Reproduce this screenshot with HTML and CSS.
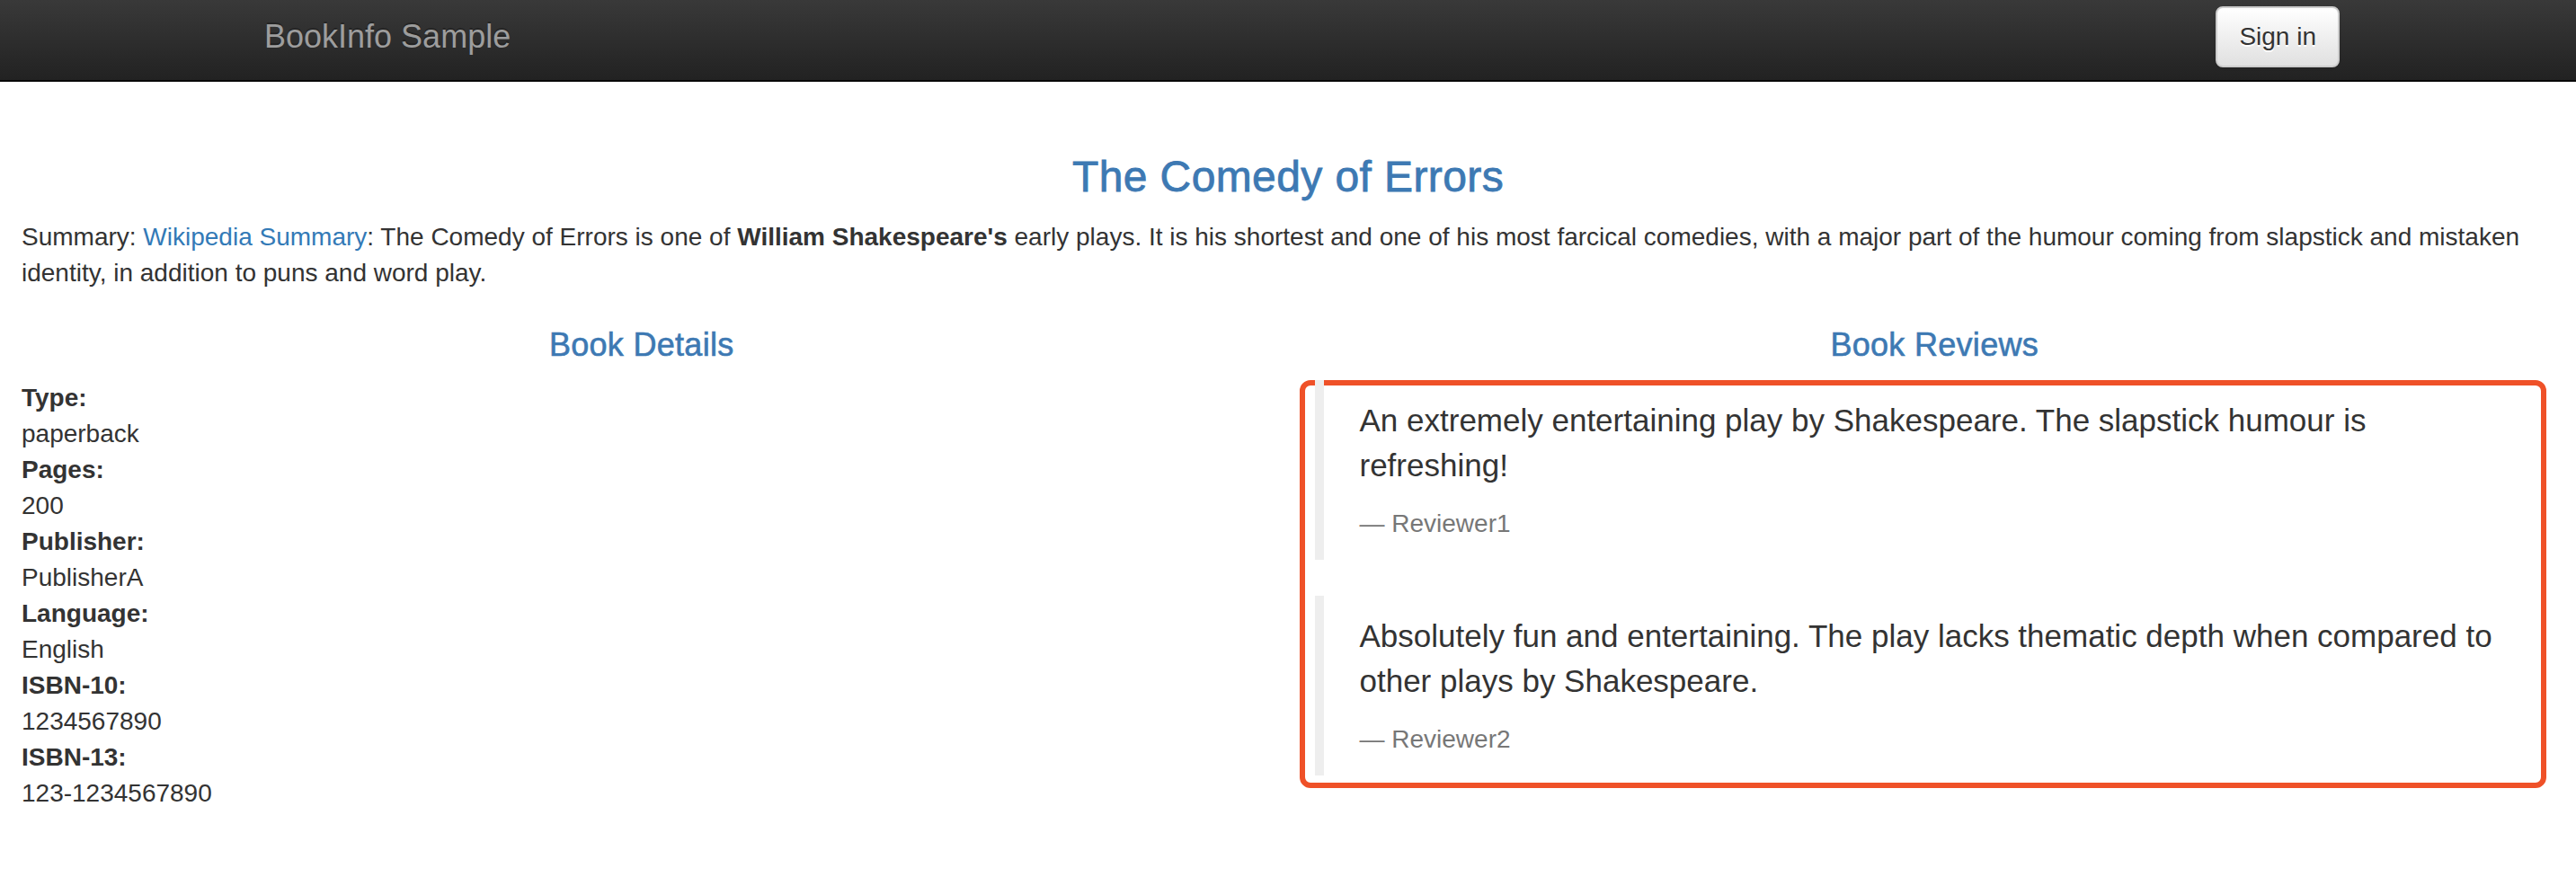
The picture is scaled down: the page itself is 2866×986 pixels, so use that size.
FILE: index.html
```html
<!DOCTYPE html>
<html lang="en">
<head>
<meta charset="utf-8">
<title>Simple Bookstore App</title>
<link rel="stylesheet" href="styles.css">
</head>
<body>
<nav class="navbar">
  <div class="nav-inner">
    <a class="brand" href="#">BookInfo Sample</a>
    <button type="button" class="btn">Sign in</button>
  </div>
</nav>
<main class="page">
  <h3 class="title">The Comedy of Errors</h3>
  <p class="summary">Summary: <a href="#">Wikipedia Summary</a>: The Comedy of Errors is one of <b>William Shakespeare's</b> early plays. It is his shortest and one of his most farcical comedies, with a major part of the humour coming from slapstick and mistaken identity, in addition to puns and word play.</p>
  <div class="columns">
    <section class="col">
      <h4 class="section-title">Book Details</h4>
      <dl class="details">
        <dt>Type:</dt><dd>paperback</dd>
        <dt>Pages:</dt><dd>200</dd>
        <dt>Publisher:</dt><dd>PublisherA</dd>
        <dt>Language:</dt><dd>English</dd>
        <dt>ISBN-10:</dt><dd>1234567890</dd>
        <dt>ISBN-13:</dt><dd>123-1234567890</dd>
      </dl>
    </section>
    <section class="col">
      <h4 class="section-title">Book Reviews</h4>
      <div class="review-box">
        <blockquote class="review">
          <p>An extremely entertaining play by Shakespeare. The slapstick humour is refreshing!</p>
          <small>Reviewer1</small>
        </blockquote>
        <blockquote class="review">
          <p>Absolutely fun and entertaining. The play lacks thematic depth when compared to other plays by Shakespeare.</p>
          <small>Reviewer2</small>
        </blockquote>
      </div>
    </section>
  </div>
</main>
</body>
</html>
```
FILE: styles.css
```css
* { box-sizing: border-box; }
html, body { margin: 0; padding: 0; background: #fff; }
body {
  font-family: "Liberation Sans", Arial, Helvetica, sans-serif;
  font-size: 28px;
  line-height: 40px;
  color: #333;
}
.navbar {
  height: 91px;
  background: linear-gradient(to bottom, #393939 0%, #222 100%);
  border-bottom: 2px solid #080808;
}
.nav-inner {
  width: 2340px;
  height: 100%;
  margin: 0 auto;
  display: flex;
  justify-content: space-between;
  align-items: flex-start;
}
.brand {
  padding: 21px 0 0 31px;
  font-size: 36px;
  line-height: 40px;
  color: #9d9d9d;
  text-decoration: none;
  text-shadow: 0 -2px 0 rgba(0,0,0,.25);
}
.btn {
  margin-top: 7px;
  padding: 12px 24px;
  font-family: inherit;
  font-size: 28px;
  line-height: 40px;
  color: #333;
  background: linear-gradient(to bottom, #fff 0%, #e0e0e0 100%);
  border: 2px solid #ccc;
  border-radius: 8px;
  text-shadow: 0 2px 0 #fff;
  box-shadow: inset 0 2px 0 rgba(255,255,255,.15), 0 2px 2px rgba(0,0,0,.075);
}
.page { padding: 40px 24px 0; }
.title {
  margin: 40px 0 20px;
  font-size: 48px;
  line-height: 1.1;
  font-weight: 500;
  letter-spacing: 0.4px;
  -webkit-text-stroke: 0.8px #3d79b3;
  color: #3d79b3;
  text-align: center;
}
.summary { margin: 0; }
.summary a { color: #337ab7; text-decoration: none; }
.columns {
  display: grid;
  grid-template-columns: 1fr 1fr;
  column-gap: 59px;
}
.section-title {
  margin: 40px 0 20px;
  font-size: 36px;
  line-height: 1.1;
  font-weight: 500;
  letter-spacing: 0.3px;
  -webkit-text-stroke: 0.6px #3d79b3;
  color: #3d79b3;
  text-align: center;
}
.details { margin: 0 0 40px; }
.details dt { font-weight: bold; }
.details dd { margin: 0; }
.review-box {
  border: 6px solid #ef5128;
  border-radius: 12px;
  margin: 0 9px 0 -17px;
  padding: 0 0 8px 11px;
}
.review {
  margin: 0 0 40px;
  padding: 20px 32px 20px 40px;
  border-left: 10px solid #eee;
  font-size: 35px;
  line-height: 50px;
}
.review:first-child { margin-top: -6px; }
.review:last-child { margin-bottom: 0; }
.review p { margin: 0 0 20px; }
.review small {
  display: block;
  font-size: 28px;
  line-height: 40px;
  color: #777;
}
.review small::before { content: "\2014 \00A0"; }
```
